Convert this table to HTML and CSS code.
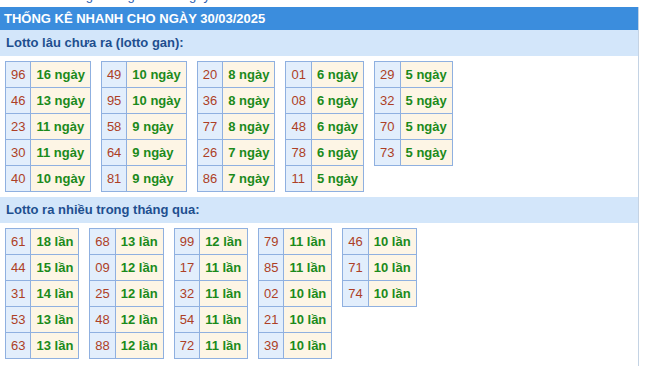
FILE: index.html
```html
<!DOCTYPE html>
<html lang="vi">
  <head>
    <meta charset="utf-8" />
    <meta name="viewport" content="width=device-width, initial-scale=1" />
    <title>Thống kê nhanh</title>
    <link rel="stylesheet" href="styles.css">
  </head>
  <body>
    <!-- tail end of the link line above the box -->
    <div class="topline"><span>Xem thống kê lô gan theo ngày</span></div>

    <div class="box">
      <h2 class="title">THỐNG KÊ NHANH CHO NGÀY 30/03/2025</h2>

      <div class="subtitle">Lotto lâu chưa ra (lotto gan):</div>
      <div class="tables">
        <table class="lo">
          <tr><td class="num">96</td><td class="cnt">16 ngày</td></tr>
          <tr><td class="num">46</td><td class="cnt">13 ngày</td></tr>
          <tr><td class="num">23</td><td class="cnt">11 ngày</td></tr>
          <tr><td class="num">30</td><td class="cnt">11 ngày</td></tr>
          <tr><td class="num">40</td><td class="cnt">10 ngày</td></tr>
        </table>
        <table class="lo">
          <tr><td class="num">49</td><td class="cnt">10 ngày</td></tr>
          <tr><td class="num">95</td><td class="cnt">10 ngày</td></tr>
          <tr><td class="num">58</td><td class="cnt">9 ngày</td></tr>
          <tr><td class="num">64</td><td class="cnt">9 ngày</td></tr>
          <tr><td class="num">81</td><td class="cnt">9 ngày</td></tr>
        </table>
        <table class="lo">
          <tr><td class="num">20</td><td class="cnt">8 ngày</td></tr>
          <tr><td class="num">36</td><td class="cnt">8 ngày</td></tr>
          <tr><td class="num">77</td><td class="cnt">8 ngày</td></tr>
          <tr><td class="num">26</td><td class="cnt">7 ngày</td></tr>
          <tr><td class="num">86</td><td class="cnt">7 ngày</td></tr>
        </table>
        <table class="lo">
          <tr><td class="num">01</td><td class="cnt">6 ngày</td></tr>
          <tr><td class="num">08</td><td class="cnt">6 ngày</td></tr>
          <tr><td class="num">48</td><td class="cnt">6 ngày</td></tr>
          <tr><td class="num">78</td><td class="cnt">6 ngày</td></tr>
          <tr><td class="num">11</td><td class="cnt">5 ngày</td></tr>
        </table>
        <table class="lo">
          <tr><td class="num">29</td><td class="cnt">5 ngày</td></tr>
          <tr><td class="num">32</td><td class="cnt">5 ngày</td></tr>
          <tr><td class="num">70</td><td class="cnt">5 ngày</td></tr>
          <tr><td class="num">73</td><td class="cnt">5 ngày</td></tr>
        </table>
      </div>

      <div class="subtitle">Lotto ra nhiều trong tháng qua:</div>
      <div class="tables">
        <table class="lo">
          <tr><td class="num">61</td><td class="cnt">18 lần</td></tr>
          <tr><td class="num">44</td><td class="cnt">15 lần</td></tr>
          <tr><td class="num">31</td><td class="cnt">14 lần</td></tr>
          <tr><td class="num">53</td><td class="cnt">13 lần</td></tr>
          <tr><td class="num">63</td><td class="cnt">13 lần</td></tr>
        </table>
        <table class="lo">
          <tr><td class="num">68</td><td class="cnt">13 lần</td></tr>
          <tr><td class="num">09</td><td class="cnt">12 lần</td></tr>
          <tr><td class="num">25</td><td class="cnt">12 lần</td></tr>
          <tr><td class="num">48</td><td class="cnt">12 lần</td></tr>
          <tr><td class="num">88</td><td class="cnt">12 lần</td></tr>
        </table>
        <table class="lo">
          <tr><td class="num">99</td><td class="cnt">12 lần</td></tr>
          <tr><td class="num">17</td><td class="cnt">11 lần</td></tr>
          <tr><td class="num">32</td><td class="cnt">11 lần</td></tr>
          <tr><td class="num">54</td><td class="cnt">11 lần</td></tr>
          <tr><td class="num">72</td><td class="cnt">11 lần</td></tr>
        </table>
        <table class="lo">
          <tr><td class="num">79</td><td class="cnt">11 lần</td></tr>
          <tr><td class="num">85</td><td class="cnt">11 lần</td></tr>
          <tr><td class="num">02</td><td class="cnt">10 lần</td></tr>
          <tr><td class="num">21</td><td class="cnt">10 lần</td></tr>
          <tr><td class="num">39</td><td class="cnt">10 lần</td></tr>
        </table>
        <table class="lo">
          <tr><td class="num">46</td><td class="cnt">10 lần</td></tr>
          <tr><td class="num">71</td><td class="cnt">10 lần</td></tr>
          <tr><td class="num">74</td><td class="cnt">10 lần</td></tr>
        </table>
      </div>
    </div>
  </body>
</html>
```

FILE: styles.css
```css
body {
  margin: 0;
  font-family: "Liberation Sans", Arial, sans-serif;
  background: #fff;
}

/* only the descenders of this line are visible */
.topline {
  height: 7px;
  overflow: hidden;
  position: relative;
}

.topline span {
  position: absolute;
  left: 30px;
  bottom: 3px;
  font-size: 13px;
  line-height: 16px;
  color: #2a5db0;
}

.box {
  width: 638px;
  border-right: 1px solid #c4d3e4;
  padding-bottom: 10px;
}

.title {
  margin: 0;
  height: 23px;
  line-height: 23px;
  padding-left: 4px;
  background-color: #3b8ddd;
  color: #fff;
  font-size: 13px;
  font-weight: bold;
}

.subtitle {
  height: 26px;
  line-height: 26px;
  padding-left: 6px;
  background-color: #d3e6fa;
  color: #1e4f8f;
  font-size: 13px;
  font-weight: bold;
}

.tables {
  display: flex;
  flex-wrap: wrap;
  align-items: flex-start;
  gap: 10px;
  padding: 5px 5px;
}

.lo {
  border-collapse: collapse;
  font-size: 13px;
}

.lo td {
  height: 25px;
  padding: 0 5px;
  border: 1px solid #8fb0e0;
  white-space: nowrap;
}

.lo .num {
  background-color: #e2eefc;
  color: #ad3f26;
}

.lo .cnt {
  background-color: #fdf5e5;
  color: #1b8a1b;
  font-weight: bold;
}
```
